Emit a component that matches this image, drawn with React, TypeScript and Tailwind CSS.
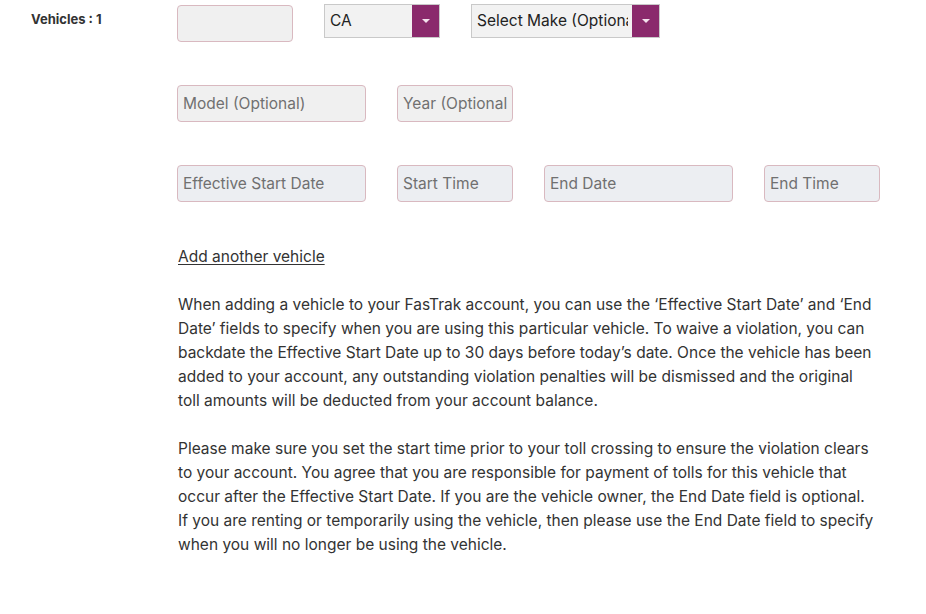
const font = { fontFamily: '"Inter", "Liberation Sans", sans-serif' };

function TextBox({ placeholder = '', wide = false, tone = 'plain' }: { placeholder?: string; wide?: boolean; tone?: 'plain' | 'date' }) {
  return (
    <div
      className={`${wide ? 'w-[189px]' : 'w-[116px]'} h-[37px] shrink-0 rounded-[4px] border border-[#d9b9c0] ${
        tone === 'date' ? 'bg-[#eceef2]' : 'bg-[#f0f0f0]'
      } flex items-center px-[5px] text-[15.5px] text-[#707070]`}
    >
      <span className="block w-full overflow-hidden whitespace-nowrap">{placeholder}</span>
    </div>
  );
}

function SelectBox({ value, wide = false }: { value: string; wide?: boolean }) {
  return (
    <div className={`${wide ? 'w-[189px]' : 'w-[116px]'} h-[34px] shrink-0 flex border border-[#c9c9c9] bg-[#f2f2f2]`}>
      <div className="flex-1 min-w-0 flex items-center pl-[5px] pr-[4px] text-[15.5px] text-[#222]">
        <span className="block w-full overflow-hidden whitespace-nowrap">{value}</span>
      </div>
      <div className="w-[27px] shrink-0 bg-[#8a2a6c] flex items-center justify-center">
        <svg width="8" height="5" viewBox="0 0 8 5">
          <path d="M0 0h8L4 4z" fill="#f3e3ee" />
        </svg>
      </div>
    </div>
  );
}

export default function App() {
  return (
    <div className="bg-white w-[926px] h-[614px] flex" style={font}>
      <div className="w-[177px] pl-[31px] pt-[6px] shrink-0">
        <span className="text-[13px] font-bold text-[#333]">Vehicles : 1</span>
      </div>
      <div className="flex flex-col pt-[4px]">
        <div className="flex gap-[31px] items-start">
          <div className="mt-[1px]">
            <TextBox />
          </div>
          <SelectBox value="CA" />
          <SelectBox value="Select Make (Optional)" wide />
        </div>
        <div className="flex gap-[31px] mt-[43px]">
          <TextBox placeholder="Model (Optional)" wide />
          <TextBox placeholder="Year (Optional)" />
        </div>
        <div className="flex gap-[31px] mt-[43px]">
          <TextBox placeholder="Effective Start Date" wide tone="date" />
          <TextBox placeholder="Start Time" tone="date" />
          <TextBox placeholder="End Date" wide tone="date" />
          <TextBox placeholder="End Time" tone="date" />
        </div>
        <a className="mt-[43px] ml-[1px] text-[15.5px] leading-[24px] text-[#333] underline underline-offset-2 self-start">Add another vehicle</a>
        <div className="w-[730px] ml-[1px] text-[15.5px] leading-[24px] text-[#333]">
          <p className="mt-[24px]">
            When adding a vehicle to your FasTrak account, you can use the ‘Effective Start Date’ and ‘End
            <br />
            Date’ fields to specify when you are using this particular vehicle. To waive a violation, you can
            <br />
            backdate the Effective Start Date up to 30 days before today’s date. Once the vehicle has been
            <br />
            added to your account, any outstanding violation penalties will be dismissed and the original
            <br />
            toll amounts will be deducted from your account balance.
          </p>
          <p className="mt-[24px]">
            Please make sure you set the start time prior to your toll crossing to ensure the violation clears
            <br />
            to your account. You agree that you are responsible for payment of tolls for this vehicle that
            <br />
            occur after the Effective Start Date. If you are the vehicle owner, the End Date field is optional.
            <br />
            If you are renting or temporarily using the vehicle, then please use the End Date field to specify
            <br />
            when you will no longer be using the vehicle.
          </p>
        </div>
      </div>
    </div>
  );
}
